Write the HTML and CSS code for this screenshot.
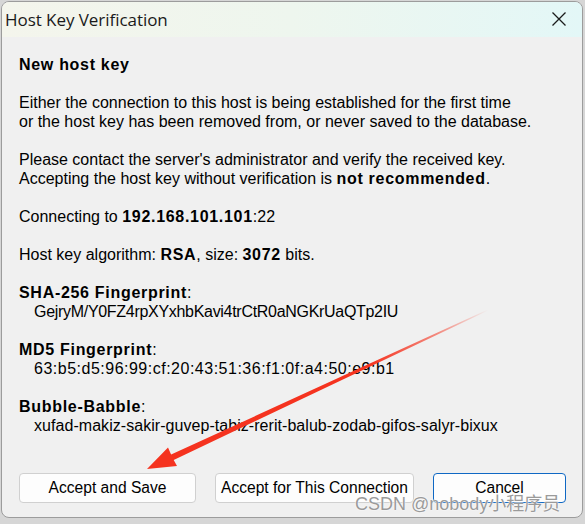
FILE: index.html
```html
<!DOCTYPE html>
<html lang="en">
<head>
<meta charset="utf-8">
<title>Host Key Verification</title>
<link rel="stylesheet" href="styles.css">
</head>
<body>
<div class="window">
  <div class="titlebar">
    <span class="title">Host Key Verification</span>
    <span class="close" aria-label="Close">
      <svg width="16" height="16" viewBox="0 0 16 16"><path d="M1.5 1.5 L14.5 14.5 M14.5 1.5 L1.5 14.5" stroke="#1b1b1b" stroke-width="1.3" fill="none"/></svg>
    </span>
  </div>
  <div class="content">
    <p class="heading">New host key</p>
    <p>Either the connection to this host is being established for the first time<br>or the host key has been removed from, or never saved to the database.</p>
    <p>Please contact the server's administrator and verify the received key.<br>Accepting the host key without verification is <b>not recommended</b>.</p>
    <p>Connecting to <b>192.168.101.101</b>:22</p>
    <p>Host key algorithm: <b>RSA</b>, size: <b>3072</b> bits.</p>
    <div class="field">
      <div><b>SHA-256 Fingerprint</b>:</div>
      <div class="value value-sha">GejryM/Y0FZ4rpXYxhbKavi4trCtR0aNGKrUaQTp2IU</div>
    </div>
    <div class="field">
      <div><b>MD5 Fingerprint</b>:</div>
      <div class="value value-md5">63:b5:d5:96:99:cf:20:43:51:36:f1:0f:a4:50:e9:b1</div>
    </div>
    <div class="field last">
      <div><b>Bubble-Babble</b>:</div>
      <div class="value value-bb">xufad-makiz-sakir-guvep-tabiz-rerit-balub-zodab-gifos-salyr-bixux</div>
    </div>
  </div>
  <div class="buttons">
    <button class="btn btn-save">Accept and Save</button>
    <button class="btn btn-once">Accept for This Connection</button>
    <button class="btn btn-cancel">Cancel</button>
  </div>
</div>
<svg class="arrow" width="585" height="524" viewBox="0 0 585 524">
  <defs>
    <linearGradient id="fade" gradientUnits="userSpaceOnUse" x1="488" y1="310" x2="147" y2="469">
      <stop offset="0" stop-color="#f5331f" stop-opacity="0"/>
      <stop offset="0.15" stop-color="#f5331f" stop-opacity="0.55"/>
      <stop offset="0.35" stop-color="#f5331f" stop-opacity="1"/>
      <stop offset="1" stop-color="#f5331f" stop-opacity="1"/>
    </linearGradient>
  </defs>
  <polygon fill="url(#fade)" points="147,469 177,466 173.7,459.9 488.2,310.5 487.8,309.5 171.1,454.5 168,447.5"/>
</svg>
<div class="watermark">CSDN @nobody小程序员</div>
</body>
</html>
```
FILE: styles.css
```css
html, body {
  margin: 0;
  padding: 0;
}
body {
  width: 585px;
  height: 524px;
  background: #d6d6d6;
  position: relative;
  overflow: hidden;
  font-family: "Liberation Sans", Arial, sans-serif;
}
.window {
  margin: 1px 0 0 1px;
  width: 580px;
  height: 515px;
  border: 1px solid #9c9c9c;
  border-radius: 8px;
  background: #f0f0f0;
  display: flex;
  flex-direction: column;
  overflow: hidden;
}
.titlebar {
  height: 35px;
  flex: none;
  display: flex;
  align-items: center;
  justify-content: space-between;
  padding: 0 15px 0 3px;
  background: linear-gradient(90deg, #f4f5ec 0%, #eef6ee 50%, #e3f7f7 100%);
}
.title {
  font-family: "Open Sans", "Noto Sans", sans-serif;
  font-size: 17px;
  color: #1a1a1a;
  letter-spacing: -0.05px;
  margin-top: -1px;
}
.close {
  display: flex;
  width: 16px;
  height: 16px;
  margin-top: -1px;
}
.content {
  padding: 18px 0 0 17px;
  font-size: 16px;
  line-height: 19px;
  color: #000;
}
.content p {
  margin: 0 0 19px;
}
.content .heading {
  font-weight: bold;
  letter-spacing: 0.7px;
}
.content b {
  font-weight: bold;
  letter-spacing: 0.7px;
}
.field {
  margin-bottom: 19px;
}
.field.last {
  margin-bottom: 0;
}
.value {
  padding-left: 15px;
}
.value-sha { letter-spacing: -0.3px; }
.value-md5 { letter-spacing: 0.5px; }
.value-bb { letter-spacing: 0.05px; }
.buttons {
  margin-top: auto;
  display: flex;
  gap: 19px;
  padding: 0 0 14px 17px;
}
.btn {
  height: 30px;
  box-sizing: border-box;
  background: #fdfdfd;
  border: 1px solid #d0d0d0;
  border-radius: 4px;
  font-family: "Liberation Sans", Arial, sans-serif;
  font-size: 15.6px;
  color: #000;
  padding: 0;
}
.btn-save { width: 177px; }
.btn-once { width: 199px; }
.btn-cancel {
  width: 133px;
  border-color: #0f68c4;
}
.arrow {
  position: absolute;
  left: 0;
  top: 0;
  pointer-events: none;
}
.watermark {
  position: absolute;
  left: 355px;
  top: 493px;
  font-family: "Liberation Sans", "Noto Sans CJK SC", sans-serif;
  font-size: 18px;
  line-height: 22px;
  color: #9a9a9a;
  text-shadow: 0 0 1px #fff, 0 0 2px #fff;
  white-space: nowrap;
}
```
